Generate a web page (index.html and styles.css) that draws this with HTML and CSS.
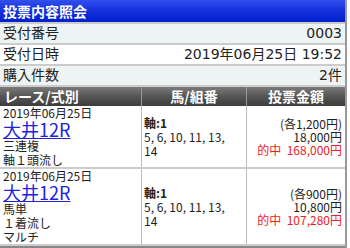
FILE: index.html
```html
<!DOCTYPE html>
<html lang="ja">
<head>
    <meta charset="UTF-8">
    <meta name="viewport" content="width=device-width, initial-scale=1.0">
    <title>投票内容照会</title>
    <link rel="stylesheet" href="styles.css">
</head>
<body>
    <div class="page">
        <div class="title">投票内容照会</div>
        <div class="info-row odd">
            <span>受付番号</span>
            <span>0003</span>
        </div>
        <div class="info-row">
            <span>受付日時</span>
            <span>2019年06月25日 19:52</span>
        </div>
        <div class="info-row odd">
            <span>購入件数</span>
            <span>2件</span>
        </div>

        <table class="bets">
            <tr>
                <th class="col-race">レース/式別</th>
                <th class="col-horse">馬/組番</th>
                <th class="col-amount">投票金額</th>
            </tr>
            <tr>
                <td class="race">
                    2019年06月25日<br>
                    <a href="#" class="race-link">大井12R</a><br>
                    三連複<br>
                    軸１頭流し
                </td>
                <td class="horse">
                    <b>軸:1</b><br>
                    5, 6, 10, 11, 13, 14
                </td>
                <td class="amount">
                    (各1,200円)<br>
                    18,000円<br>
                    <span class="hit">的中&nbsp;&nbsp;168,000円</span>
                </td>
            </tr>
            <tr>
                <td class="race">
                    2019年06月25日<br>
                    <a href="#" class="race-link">大井12R</a><br>
                    馬単<br>
                    １着流し<br>
                    マルチ
                </td>
                <td class="horse">
                    <b>軸:1</b><br>
                    5, 6, 10, 11, 13, 14
                </td>
                <td class="amount">
                    (各900円)<br>
                    10,800円<br>
                    <span class="hit">的中&nbsp;&nbsp;107,280円</span>
                </td>
            </tr>
        </table>
        <div class="bottom-bar"></div>
    </div>
</body>
</html>
```

FILE: styles.css
```css
body {
    margin: 0;
    font-family: "Noto Sans CJK JP", "Liberation Sans", sans-serif;
    color: #222;
    background: #fff;
}

.page {
    width: 345px;
    border-right: 2px solid #999;
}

.title {
    height: 22px;
    line-height: 22px;
    padding-left: 3px;
    color: #fff;
    font-size: 14px;
    font-weight: bold;
    background: linear-gradient(#3050ee 0%, #1530dc 50%, #0020cc 100%);
}

.info-row {
    display: flex;
    justify-content: space-between;
    height: 19px;
    line-height: 19px;
    padding: 0 3px;
    font-family: "DejaVu Sans", "Noto Sans CJK JP", sans-serif;
    font-size: 14px;
    border-top: 2px solid #ccc;
    background: #fff;
}

.info-row.odd {
    background: #eef4f4;
}

.bets {
    width: 100%;
    border-collapse: collapse;
    font-size: 12px;
    line-height: 14px;
    border-top: 2px solid #ccc;
}

.bets th {
    height: 19px;
    padding: 0 4px;
    color: #fff;
    font-size: 14px;
    line-height: 19px;
    font-weight: bold;
    background: linear-gradient(#7a7a7a 0%, #555 50%, #3c3c3c 100%);
    border-left: 1px solid #999;
}

.col-race {
    width: 133px;
    text-align: left;
}

.col-horse {
    width: 96px;
    text-align: center;
}

.col-amount {
    text-align: center;
}

.bets td {
    padding: 0 3px;
    border-left: 1px solid #bbb;
    border-bottom: 2px solid #ccc;
}

.bets th:first-child {
    border-left: none;
}

.bets td.race {
    vertical-align: top;
    border-left: none;
}

.bets td.horse {
    vertical-align: middle;
    padding: 0 6px 0 2px;
}

.race-link {
    color: #2222dd;
    font-size: 18px;
    line-height: 18px;
}

.amount {
    text-align: right;
    vertical-align: middle;
    line-height: 13px;
}

.hit {
    color: #ee2222;
}

.bottom-bar {
    height: 4px;
    background: #888;
}
```
